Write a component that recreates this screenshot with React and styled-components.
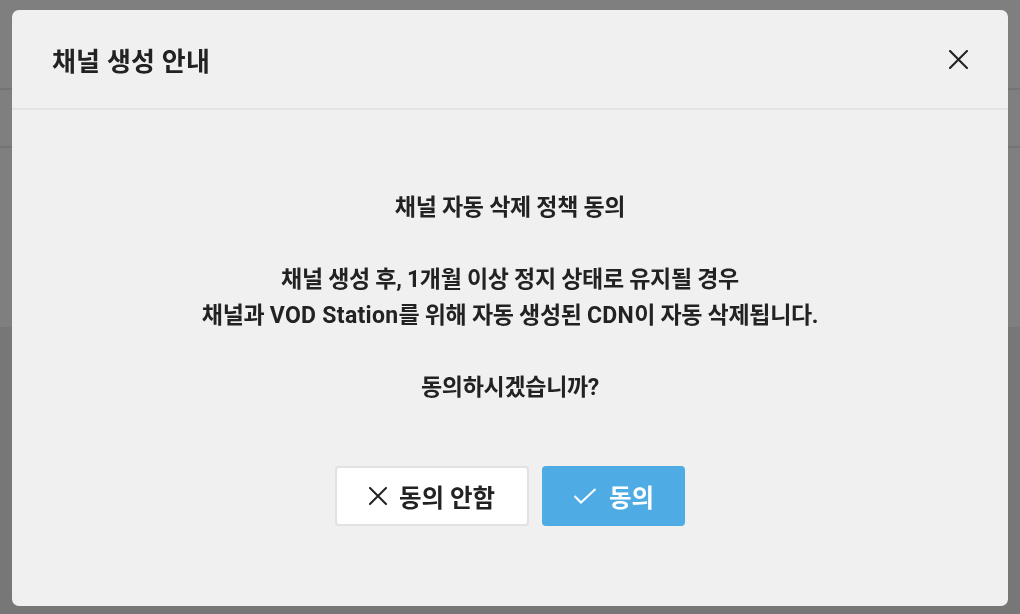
import React from "react";
import styled, { createGlobalStyle } from "styled-components";

const Global = createGlobalStyle`
  html, body { margin: 0; padding: 0; }
  body {
    width: 1020px;
    height: 614px;
    overflow: hidden;
    font-family: Roboto, "Noto Sans CJK KR", sans-serif;
    background: #eeeeee;
  }
`;

const Page = styled.div`
  width: 1020px;
  height: 614px;
  display: flex;
  flex-direction: column;
`;

const PageTop = styled.div`
  height: 327px;
  background: #ffffff;
  display: flex;
  flex-direction: column;
`;

const PageRow = styled.div`
  height: ${(p) => p.$h}px;
  border-bottom: 2px solid #e8e8e8;
  box-sizing: border-box;
`;

const Overlay = styled.div`
  position: fixed;
  inset: 0;
  background: rgba(0, 0, 0, 0.5);
  display: flex;
  padding: 10px 12px 8px;
  box-sizing: border-box;
`;

const Modal = styled.div`
  flex: 1;
  background: #f0f0f0;
  border-radius: 7px;
  display: flex;
  flex-direction: column;
  overflow: hidden;
`;

const Header = styled.div`
  height: 98px;
  flex: none;
  display: flex;
  align-items: center;
  justify-content: space-between;
  padding: 0 40px;
  border-bottom: 2px solid #e3e3e3;
`;

const Title = styled.h2`
  margin: 0;
  font-size: 26px;
  font-weight: 700;
  color: #222222;
  letter-spacing: 0.2px;
`;

const CloseButton = styled.button`
  width: 20px;
  height: 20px;
  padding: 0;
  border: 0;
  background: transparent;
  display: flex;
  align-items: center;
  justify-content: center;
  cursor: pointer;
`;

const Body = styled.div`
  flex: 1;
  display: flex;
  flex-direction: column;
  align-items: center;
  padding-top: 80px;
`;

const Message = styled.p`
  margin: 0;
  text-align: center;
  font-size: 23px;
  line-height: 36px;
  font-weight: 700;
  color: #222222;
  letter-spacing: -0.3px;
`;

const Latin = styled.span`
  letter-spacing: 0.3px;
`;

const Actions = styled.div`
  display: flex;
  gap: 13px;
  margin-top: 60px;
`;

const Button = styled.button`
  height: 60px;
  box-sizing: border-box;
  border-radius: 4px;
  display: flex;
  align-items: center;
  justify-content: center;
  gap: 12px;
  padding: 0;
  font-family: Roboto, "Noto Sans CJK KR", sans-serif;
  font-size: 24.5px;
  font-weight: 700;
  letter-spacing: 0;
  cursor: pointer;
  width: ${(p) => p.$w}px;
  background: ${(p) => (p.$primary ? "#4fabe3" : "#ffffff")};
  color: ${(p) => (p.$primary ? "#ffffff" : "#222222")};
  border: ${(p) => (p.$primary ? "0" : "2px solid #e2e2e2")};
`;

const XIcon = ({ size = 18, color = "#222", w = 2 }) => (
  <svg width={size} height={size} viewBox="0 0 18 18" fill="none">
    <path d="M1 1L17 17M17 1L1 17" stroke={color} strokeWidth={w} strokeLinecap="square" />
  </svg>
);

const CheckIcon = () => (
  <svg width="24" height="16" viewBox="0 0 24 16" fill="none">
    <path d="M1.5 8L8 14.5L22.5 1" stroke="#ffffff" strokeWidth="2" />
  </svg>
);

export default function App() {
  return (
    <>
      <Global />
      <Page>
        <PageTop>
          <PageRow $h={90} />
          <PageRow $h={58} />
        </PageTop>
      </Page>
      <Overlay>
        <Modal>
          <Header>
            <Title>채널 생성 안내</Title>
            <CloseButton aria-label="닫기">
              <XIcon size={19} />
            </CloseButton>
          </Header>
          <Body>
            <Message>
              채널 자동 삭제 정책 동의
              <br />
              <br />
              채널 생성 후, 1개월 이상 정지 상태로 유지될 경우
              <br />
              채널과 <Latin>VOD Station</Latin>를 위해 자동 생성된 <Latin>CDN</Latin>이 자동 삭제됩니다.
              <br />
              <br />
              동의하시겠습니까?
            </Message>
            <Actions>
              <Button $w={194}>
                <XIcon size={18} />
                동의 안함
              </Button>
              <Button $w={143} $primary>
                <CheckIcon />
                동의
              </Button>
            </Actions>
          </Body>
        </Modal>
      </Overlay>
    </>
  );
}
